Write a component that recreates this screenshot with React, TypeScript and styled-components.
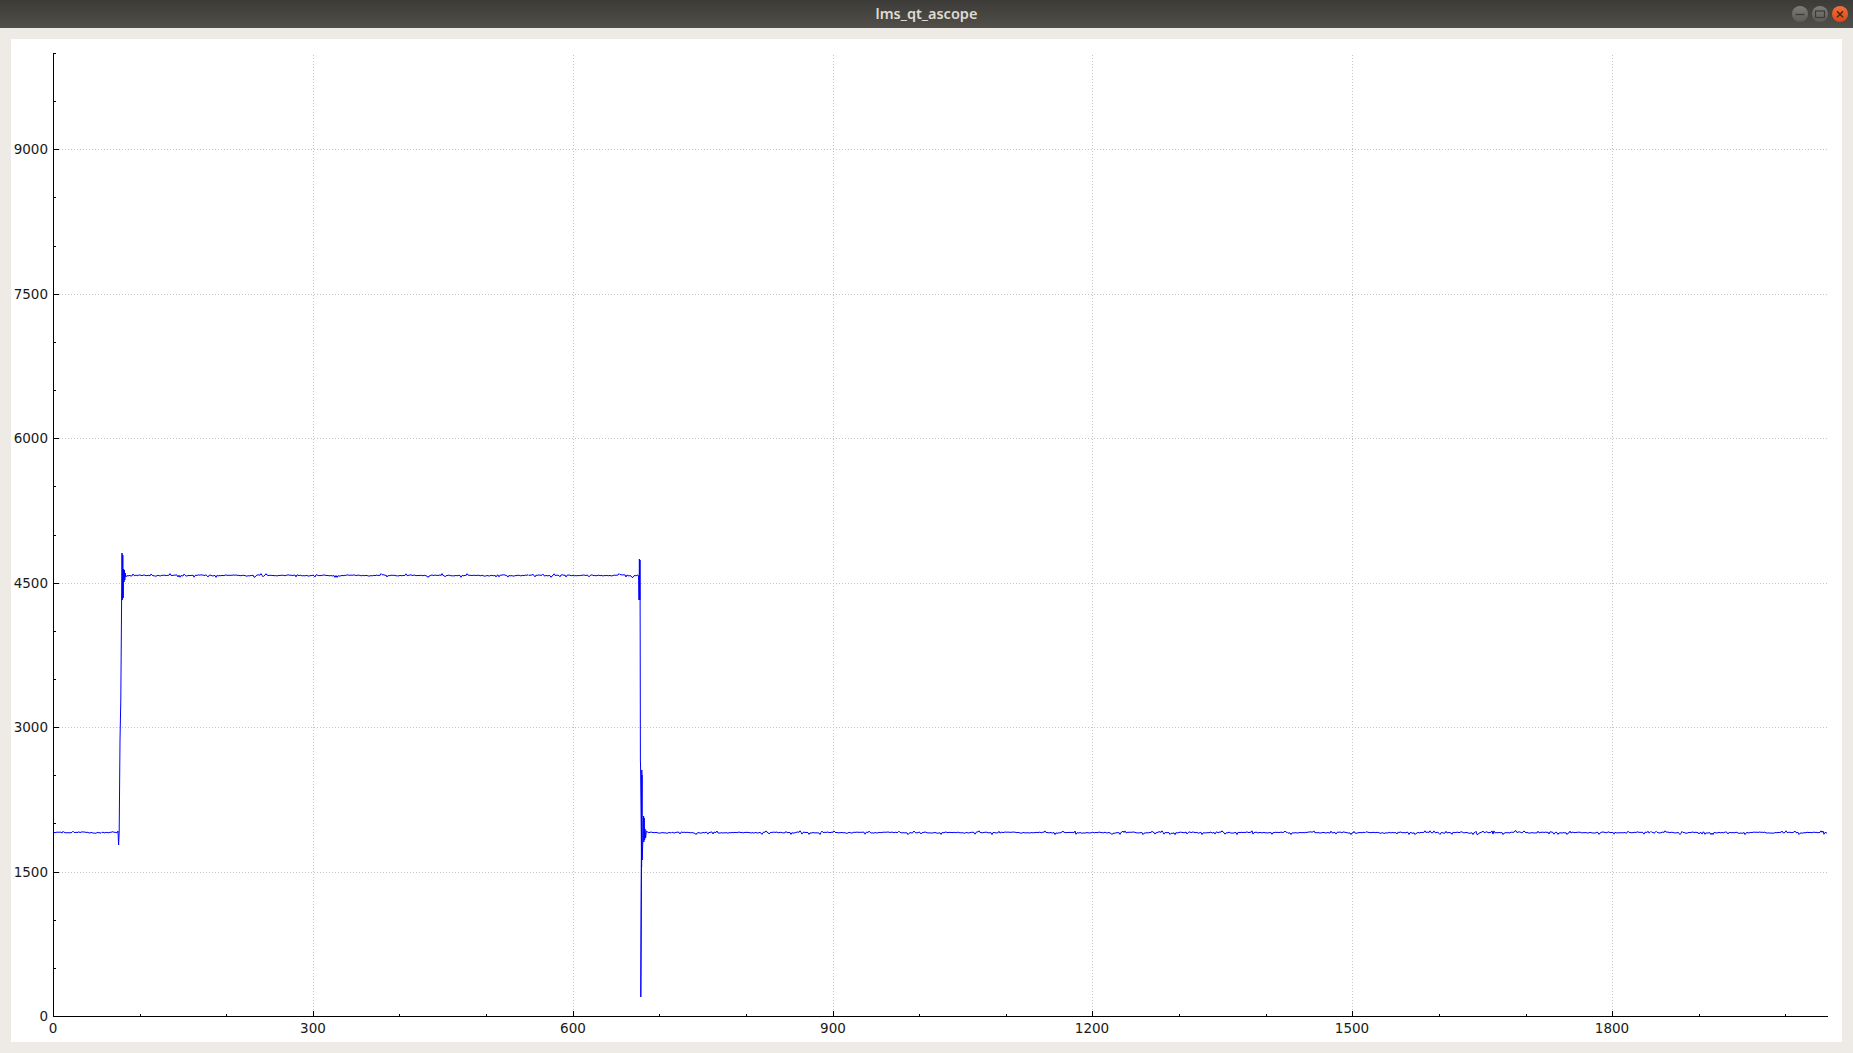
import styled, { createGlobalStyle } from 'styled-components'

// axis geometry, in page pixels (the svg viewBox matches the page)
const LEFT = 53
const RIGHT = 1828
const TOP = 53
const BOTTOM = 1016
const xPx = (v: number) => Math.round(LEFT + v * 0.8662)
const yPx = (v: number) => Math.round(BOTTOM - ((v * (BOTTOM - TOP)) / 10000))

const X_MAJOR = [0, 300, 600, 900, 1200, 1500, 1800]
const Y_MAJOR = [0, 1500, 3000, 4500, 6000, 7500, 9000]
const X_MINOR = Array.from({ length: 21 }, (_, i) => i * 100).filter((v) => v % 300 !== 0)
const Y_MINOR = [500, 1000, 2000, 2500, 3500, 4000, 5000, 5500, 6500, 7000, 8000, 8500, 9500, 10000]

// small repeatable noise so the trace looks the same on each load
function noise(i: number) {
  const a = Math.sin(i * 12.9898) * 43758.5453
  const r = a - Math.floor(a) - 0.5
  const b = Math.sin(i * 0.21) * 0.3
  const dip = r > 0.45 ? 1.2 : r < -0.47 ? -1 : 0
  return r * 1.1 + b + dip
}

function flat(from: number, to: number, level: number) {
  const out: string[] = []
  for (let x = from; x <= to; x += 1) {
    out.push(`${x},${(level + noise(x)).toFixed(1)}`)
  }
  return out
}

const trace = [
  ...flat(54, 117, 832.6),
  '118,831', '118.6,845', '119.2,832', '120,740', '120.8,700', '121.6,600', '122,553', '122.4,600', '122.8,555',
  '123.2,598', '123.6,569', '124,582', '124.4,570', '124.8,580', '125.2,573', '125.8,577',
  ...flat(127, 637, 575.4),
  '638,575', '638.6,577', '639,600', '639.4,559', '639.8,600', '640,560', '640.2,640', '640.4,760',
  '640.6,769', '641.6,867', '641.8,770', '640.8,997', '641.4,866', '642,775', '642.2,860', '643.6,816', '643.8,842',
  '644.2,818', '644.6,840', '645,829', '645.6,838', '646.4,831',
  ...flat(648, 1827, 832.6),
].join(' ')

function WindowIcon({ kind }: { kind: 'min' | 'max' | 'close' }) {
  return (
    <svg width="16" height="16" viewBox="0 0 16 16" fill="none">
      {kind === 'min' && <path d="M3.5 8.5h9" stroke="#3c3b37" strokeWidth="1.2" />}
      {kind === 'max' && <rect x="3.5" y="5" width="9" height="6.5" stroke="#3c3b37" strokeWidth="1.2" />}
      {kind === 'close' && <path d="M5 5.2l6 6M11 5.2l-6 6" stroke="#3c2a20" strokeWidth="1.5" />}
    </svg>
  )
}

export default function App() {
  return (
    <>
      <GlobalStyle />
      <Root>
        <TitleBar>
          <Title>lms_qt_ascope</Title>
          <WindowButtons>
            <WindowButton>
              <WindowIcon kind="min" />
            </WindowButton>
            <WindowButton>
              <WindowIcon kind="max" />
            </WindowButton>
            <WindowButton $close>
              <WindowIcon kind="close" />
            </WindowButton>
          </WindowButtons>
        </TitleBar>
        <Body>
          <Panel>
            <Plot viewBox="11 39 1831 1003" shapeRendering="crispEdges">
              {X_MAJOR.slice(1).map((v) => (
                <GridLine key={v} x1={xPx(v) + 0.5} x2={xPx(v) + 0.5} y1={TOP + 2} y2={BOTTOM} />
              ))}
              {Y_MAJOR.slice(1).map((v) => (
                <GridLine key={v} x1={LEFT} x2={RIGHT} y1={yPx(v) + 0.5} y2={yPx(v) + 0.5} />
              ))}

              <Trace points={trace} shapeRendering="auto" />

              <Axis x1={LEFT + 0.5} x2={LEFT + 0.5} y1={TOP} y2={BOTTOM + 1} />
              <Axis x1={LEFT} x2={RIGHT} y1={BOTTOM + 0.5} y2={BOTTOM + 0.5} />

              {X_MAJOR.map((v) => (
                <Axis key={v} x1={xPx(v) + 0.5} x2={xPx(v) + 0.5} y1={BOTTOM - 5} y2={BOTTOM} />
              ))}
              {X_MINOR.map((v) => (
                <Axis key={v} x1={xPx(v) + 0.5} x2={xPx(v) + 0.5} y1={BOTTOM - 2} y2={BOTTOM} />
              ))}
              {Y_MAJOR.map((v) => (
                <Axis key={v} x1={LEFT} x2={LEFT + 6} y1={yPx(v) + 0.5} y2={yPx(v) + 0.5} />
              ))}
              {Y_MINOR.map((v) => (
                <Axis key={v} x1={LEFT} x2={LEFT + 3} y1={yPx(v) + 0.5} y2={yPx(v) + 0.5} />
              ))}

              {Y_MAJOR.map((v) => (
                <TickLabel key={v} x={48} y={yPx(v) + 5} textAnchor="end">
                  {v}
                </TickLabel>
              ))}
              {X_MAJOR.map((v) => (
                <TickLabel key={v} x={xPx(v)} y={1033} textAnchor="middle">
                  {v}
                </TickLabel>
              ))}
            </Plot>
          </Panel>
        </Body>
      </Root>
    </>
  )
}

const GlobalStyle = createGlobalStyle`
  html, body {
    margin: 0;
    height: 100%;
    overflow: hidden;
    background: #eeebe7;
  }
`

const Root = styled.div`
  display: flex;
  flex-direction: column;
  height: 100vh;
`

const TitleBar = styled.header`
  position: relative;
  display: flex;
  justify-content: center;
  align-items: center;
  flex: 0 0 28px;
  padding-bottom: 2px;
  box-sizing: border-box;
  background: linear-gradient(#3c3b37, #504f4a);
`

const Title = styled.span`
  font-family: 'Noto Sans', sans-serif;
  font-size: 14.5px;
  font-weight: 600;
  color: #dfdbd2;
`

const WindowButtons = styled.div`
  position: absolute;
  top: 6px;
  right: 5px;
  display: flex;
  gap: 4px;
`

const WindowButton = styled.div<{ $close?: boolean }>`
  display: flex;
  justify-content: center;
  align-items: center;
  width: 16px;
  height: 16px;
  border-radius: 50%;
  background: ${(p) =>
    p.$close ? 'linear-gradient(#f2703a, #dd4814)' : 'linear-gradient(#7d7c77, #5c5b56)'};
`

const Body = styled.main`
  display: flex;
  flex: 1;
  padding: 11px;
  min-height: 0;
`

const Panel = styled.section`
  flex: 1;
  background: #ffffff;
`

const Plot = styled.svg`
  display: block;
  width: 100%;
  height: 100%;
`

const GridLine = styled.line`
  stroke: #c4c4c4;
  stroke-width: 1;
  stroke-dasharray: 1 2;
`

const Axis = styled.line`
  stroke: #000000;
  stroke-width: 1;
`

const Trace = styled.polyline`
  fill: none;
  stroke: #0000ff;
  stroke-width: 1;
`

const TickLabel = styled.text`
  font-family: 'DejaVu Sans', sans-serif;
  font-size: 13.5px;
  fill: #1a1a1a;
`
